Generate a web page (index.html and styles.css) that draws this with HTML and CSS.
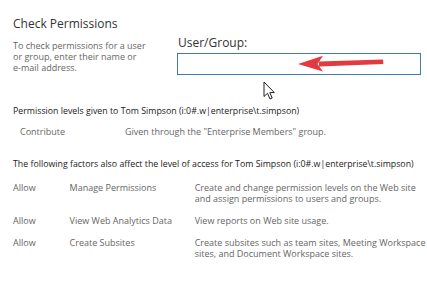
FILE: index.html
```html
<!DOCTYPE html>
<html>
<head>
<meta charset="utf-8">
<link rel="stylesheet" href="styles.css">
</head>
<body>
<div class="page">
  <div class="top">
    <div class="intro">
      <h1 class="title">Check Permissions</h1>
      <p class="help">To check permissions for a user or group, enter their name or <span class="nowrap">e-mail</span> address.</p>
    </div>
    <div class="field">
      <label class="label">User/Group:</label>
      <div class="input"></div>
    </div>
  </div>

  <div class="levels">
    <div class="section-head">Permission levels given to Tom Simpson (i:0#.w|enterprise\t.simpson)</div>
    <div class="level-row">
      <span class="level-name">Contribute</span>
      <span class="level-desc">Given through the "Enterprise Members" group.</span>
    </div>
  </div>

  <div class="factors">
    <div class="section-head">The following factors also affect the level of access for Tom Simpson (i:0#.w|enterprise\t.simpson)</div>
    <div class="factor-row">
      <span class="f-allow">Allow</span>
      <span class="f-name">Manage Permissions</span>
      <span class="f-desc">Create and change permission levels on the Web site and assign permissions to users and groups.</span>
    </div>
    <div class="factor-row">
      <span class="f-allow">Allow</span>
      <span class="f-name">View Web Analytics Data</span>
      <span class="f-desc">View reports on Web site usage.</span>
    </div>
    <div class="factor-row">
      <span class="f-allow">Allow</span>
      <span class="f-name">Create Subsites</span>
      <span class="f-desc">Create subsites such as team sites, Meeting Workspace sites, and Document Workspace sites.</span>
    </div>
  </div>

  <svg class="red-arrow" width="92" height="20" viewBox="0 0 92 20">
    <path d="M22 7.6 L86 5.4 L86.3 9.9 L22 12.4 Z" fill="#e23a3f"/>
    <path d="M1 10 L26 1.8 L20.5 10 L26 17.5 Z" fill="#e23a3f"/>
  </svg>

  <svg class="cursor" width="13" height="20" viewBox="0 0 13 20">
    <path d="M1 1 L1 15.5 L4.5 12.3 L7 18 L9.2 17 L6.8 11.6 L11.3 11.6 Z" fill="#fff" stroke="#222" stroke-width="1" stroke-linejoin="miter"/>
  </svg>
</div>
</body>
</html>
```

FILE: styles.css
```css
html, body {
  margin: 0;
  padding: 0;
  background: #fff;
}

.page {
  position: relative;
  width: 427px;
  height: 284px;
  font-family: "Open Sans", "Noto Sans", sans-serif;
  color: #444;
  overflow: hidden;
}

.top {
  display: flex;
  padding-left: 13px;
}

.intro {
  width: 164px;
}

.title {
  margin: 16px 0 0 0;
  font-size: 12px;
  line-height: 16px;
  font-weight: normal;
  color: #333;
}

.help {
  margin: 8px 0 0 0;
  font-size: 9px;
  line-height: 11px;
  color: #666;
  width: 140px;
}

.nowrap {
  white-space: nowrap;
}

.field {
  padding-top: 35px;
  display: flex;
  flex-direction: column;
}

.label {
  font-size: 12px;
  line-height: 16px;
  color: #333;
  padding-left: 1px;
}

.input {
  margin-top: 2px;
  width: 242px;
  height: 20px;
  border: 1px solid #3f7cb0;
  background: #fff;
}

.levels {
  margin-top: 30px;
  padding-left: 13px;
}

.section-head {
  font-size: 8.8px;
  line-height: 12px;
  color: #222;
  white-space: nowrap;
}

.level-row {
  display: flex;
  margin-top: 9px;
  font-size: 9px;
  line-height: 11px;
  color: #666;
}

.level-name {
  width: 105px;
  padding-left: 7px;
}

.factors {
  margin-top: 21px;
  padding-left: 13px;
}

.factor-row {
  display: flex;
  margin-top: 12px;
  font-size: 9px;
  line-height: 11px;
  color: #666;
}

.factor-row + .factor-row {
  margin-top: 11px;
}

.f-allow {
  width: 57px;
}

.f-name {
  width: 126px;
}

.f-desc {
  width: 234px;
}

.red-arrow {
  position: absolute;
  left: 297px;
  top: 54px;
}

.cursor {
  position: absolute;
  left: 263px;
  top: 81px;
}
```
